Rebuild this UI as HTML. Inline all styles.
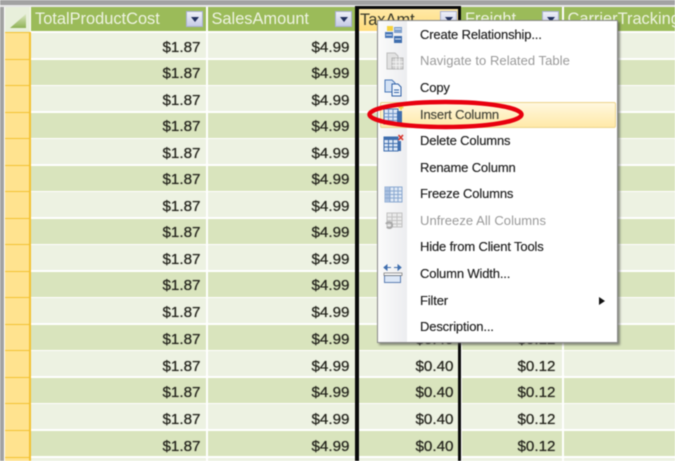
<!DOCTYPE html>
<html><head><meta charset="utf-8">
<style>
html,body{margin:0;padding:0;background:#fff}
#p{position:relative;width:675px;height:461px;overflow:hidden;background:#fff;font-family:"Liberation Sans",sans-serif;filter:blur(.45px)}
#p div{position:absolute;box-sizing:border-box}
.r{left:5px;width:670px;height:25px}
.l{background:#edf2e2}.d{background:#d9e4bd}
.y{left:5px;width:26px;height:27.5px;background:#ffe38f;border-right:2px solid #f3c232;border-top:1px solid #f3c232;border-bottom:1px solid #f3c232}
.s{top:7px;width:2px;height:454px;background:#fff}
.c{font-size:15.2px;line-height:19px;text-align:right;color:#23231a;white-space:nowrap;text-shadow:0 0 .6px #333}
.a{left:100px;width:100.500px;margin-top:-1px}.b{left:250px;width:99.500px;margin-top:-1px}.t{left:350px;width:103.500px}.f{left:455px;width:100.500px}
.t ~ .a,.t ~ .b{margin-top:0}
.h{top:7px;height:24px;background:#9bbb59;color:#eef3e2;font-size:16.4px;line-height:25px;white-space:nowrap;overflow:hidden;padding-left:4px}
.btn{top:11px;width:17px;height:16px;background:linear-gradient(#eef0f8,#c6cbe6);border:1px solid #a8afd4}
.btn:after{content:"";position:absolute;left:4px;top:5px;border:4px solid transparent;border-top:5px solid #22305e}
.m{left:420px;font-size:13px;line-height:18px;color:#222;white-space:nowrap;letter-spacing:-.15px;text-shadow:0 0 .4px #444}
.g{color:#9a9a9a;letter-spacing:.05px;text-shadow:none}
svg{position:absolute}
</style></head><body>
<div id="p">
<div style="left:0;top:0;width:675px;height:6px;background:#a2a2a2"></div>
<div style="left:0;top:0;width:4px;height:461px;background:#a2a2a2"></div>
<div style="left:0;top:5px;width:675px;height:2px;background:#e8e8e8"></div>

<div class="r l" style="top:33px"></div><div class="r d" style="top:59.500px"></div><div class="r l" style="top:86px"></div><div class="r d" style="top:112.600px"></div><div class="r l" style="top:139.100px"></div><div class="r d" style="top:165.700px"></div><div class="r l" style="top:192.200px"></div><div class="r d" style="top:218.700px"></div><div class="r l" style="top:245.200px"></div><div class="r d" style="top:271.800px"></div><div class="r l" style="top:298.300px"></div><div class="r d" style="top:324.800px"></div><div class="r l" style="top:351.400px"></div><div class="r d" style="top:377.900px"></div><div class="r l" style="top:404.400px"></div><div class="r d" style="top:431px"></div><div class="r l" style="top:457.500px"></div>

<div class="y" style="top:32px"></div><div class="y" style="top:58.500px"></div><div class="y" style="top:85px"></div><div class="y" style="top:111.600px"></div><div class="y" style="top:138.100px"></div><div class="y" style="top:164.700px"></div><div class="y" style="top:191.200px"></div><div class="y" style="top:217.700px"></div><div class="y" style="top:244.200px"></div><div class="y" style="top:270.800px"></div><div class="y" style="top:297.300px"></div><div class="y" style="top:323.800px"></div><div class="y" style="top:350.400px"></div><div class="y" style="top:376.900px"></div><div class="y" style="top:403.400px"></div><div class="y" style="top:430px"></div><div class="y" style="top:456.500px"></div>

<div class="s" style="left:206px"></div><div class="s" style="left:561.500px"></div><div class="s" style="left:460px"></div>

<div style="left:5px;top:7px;width:25px;height:25px;background:#e8efdb"></div>
<svg style="left:5px;top:7px" width="25" height="25"><defs><linearGradient id="tri" x1="0" y1="0" x2="0" y2="1"><stop offset="0" stop-color="#dbe6c2"/><stop offset="1" stop-color="#8fb255"/></linearGradient></defs><path d="M5 21L21 7V21Z" fill="url(#tri)"/></svg>

<div class="h" style="left:31px;width:175px">TotalProductCost</div>
<div class="h" style="left:207.500px;width:148px">SalesAmount</div>
<div class="h" style="left:359px;width:99px;background:linear-gradient(#ffe9a8,#ffdc7c);color:#3a3a2a;top:9px;height:22px;line-height:23px;padding-left:1px">TaxAmt</div>
<div class="h" style="left:461px;width:101px">Freight</div>
<div class="h" style="left:563.500px;width:112px">CarrierTracking</div>
<div class="btn" style="left:186px"></div><div class="btn" style="left:335px"></div><div class="btn" style="left:440px"></div><div class="btn" style="left:542px"></div>

<div class="c a" style="top:38.500px">$1.87</div><div class="c b" style="top:38.500px">$4.99</div>
<div class="c a" style="top:65px">$1.87</div><div class="c b" style="top:65px">$4.99</div>
<div class="c a" style="top:91.500px">$1.87</div><div class="c b" style="top:91.500px">$4.99</div>
<div class="c a" style="top:118px">$1.87</div><div class="c b" style="top:118px">$4.99</div>
<div class="c a" style="top:144.600px">$1.87</div><div class="c b" style="top:144.600px">$4.99</div>
<div class="c a" style="top:171.200px">$1.87</div><div class="c b" style="top:171.200px">$4.99</div>
<div class="c a" style="top:197.700px">$1.87</div><div class="c b" style="top:197.700px">$4.99</div>
<div class="c a" style="top:224.200px">$1.87</div><div class="c b" style="top:224.200px">$4.99</div>
<div class="c a" style="top:250.700px">$1.87</div><div class="c b" style="top:250.700px">$4.99</div>
<div class="c a" style="top:277.300px">$1.87</div><div class="c b" style="top:277.300px">$4.99</div>
<div class="c a" style="top:303.800px">$1.87</div><div class="c b" style="top:303.800px">$4.99</div>
<div class="c a" style="top:330.300px;margin-top:0">$1.87</div><div class="c b" style="top:330.300px;margin-top:0">$4.99</div><div class="c t" style="top:330.300px">$0.40</div><div class="c f" style="top:330.300px">$0.12</div>
<div class="c a" style="top:356.900px">$1.87</div><div class="c b" style="top:356.900px">$4.99</div><div class="c t" style="top:356.900px">$0.40</div><div class="c f" style="top:356.900px">$0.12</div>
<div class="c a" style="top:383.400px">$1.87</div><div class="c b" style="top:383.400px">$4.99</div><div class="c t" style="top:383.400px">$0.40</div><div class="c f" style="top:383.400px">$0.12</div>
<div class="c a" style="top:409.900px">$1.87</div><div class="c b" style="top:409.900px">$4.99</div><div class="c t" style="top:409.900px">$0.40</div><div class="c f" style="top:409.900px">$0.12</div>
<div class="c a" style="top:436.500px">$1.87</div><div class="c b" style="top:436.500px">$4.99</div><div class="c t" style="top:436.500px">$0.40</div><div class="c f" style="top:436.500px">$0.12</div>

<div style="left:355px;top:6px;width:4px;height:455px;background:#0a0a0a"></div>
<div style="left:457.500px;top:6px;width:3.500px;height:455px;background:#0a0a0a"></div>
<div style="left:355px;top:6px;width:106px;height:3px;background:#0a0a0a"></div>

<div style="left:377px;top:20px;width:241px;height:323px;background:#fff;border:1px solid #8a8a8a;box-shadow:2px 2px 2px rgba(60,60,60,.55)"></div>
<div style="left:378px;top:21px;width:29px;height:321px;background:linear-gradient(90deg,#fbfbfb,#ecedf0)"></div>
<div style="left:380px;top:102px;width:236px;height:26px;background:linear-gradient(#fff8df,#ffe9a8);border:1px solid #ecd48c;border-radius:2px"></div>

<div class="m" style="top:26px">Create Relationship...</div>
<div class="m g" style="top:52px">Navigate to Related Table</div>
<div class="m" style="top:79px">Copy</div>
<div class="m" style="top:106px;color:#4a4a3a">Insert Column</div>
<div class="m" style="top:132px">Delete Columns</div>
<div class="m" style="top:159px">Rename Column</div>
<div class="m" style="top:185px">Freeze Columns</div>
<div class="m g" style="top:212px">Unfreeze All Columns</div>
<div class="m" style="top:238px">Hide from Client Tools</div>
<div class="m" style="top:265px">Column Width...</div>
<div class="m" style="top:292px">Filter</div>
<div class="m" style="top:318px">Description...</div>
<svg style="left:598px;top:296px" width="9" height="10"><path d="M1 1L7 5L1 9Z" fill="#111"/></svg>

<svg style="left:384px;top:25px" width="20" height="20"><rect x="1" y="7" width="8" height="6" fill="#4a78b8"/><rect x="10" y="2" width="8" height="6" fill="#7fa0cc"/><rect x="10" y="11" width="8" height="7" fill="#3f6eae"/><rect x="3" y="1" width="6" height="5" fill="#f5d23c"/><path d="M11 4h6M11 14h6M2 10h6" stroke="#dfe8f5"/></svg>
<svg style="left:386px;top:52px" width="18" height="19"><path d="M1 1H9L12 4V17H1Z" fill="#e2e2e2" stroke="#bdbdbd"/><rect x="6" y="6" width="11" height="11" fill="#d4d4d4" stroke="#b5b5b5"/><path d="M6 10h11M6 13.500h11M10 6v11M13.500 6v11" stroke="#f2f2f2"/></svg>
<svg style="left:384px;top:79px" width="20" height="18"><path d="M1 1H8L11 4V13H1Z" fill="#d4e2f5" stroke="#4a78b8"/><path d="M8 5H14L17 8V17H8Z" fill="#eef4fc" stroke="#2f5fa5"/><path d="M10 11h5M10 13.500h5" stroke="#2f5fa5"/></svg>
<svg style="left:383px;top:104px" width="22" height="22"><rect x="1" y="5" width="14" height="15" fill="#dce7f6" stroke="#3f6eae"/><path d="M1 9.500h14M1 13h14M1 16.500h14M5.500 5v15M10 5v15" stroke="#6f94c8"/><rect x="14" y="7" width="5" height="13" fill="#3f6eae"/><path d="M18 1v5M15.500 3.500h5" stroke="#f2cf3f" stroke-width="1.500"/></svg>
<svg style="left:383px;top:134px" width="22" height="19"><rect x="1" y="3" width="14" height="14" fill="#dce7f6" stroke="#3f6eae"/><rect x="1" y="3" width="14" height="3" fill="#3f6eae"/><path d="M1 9.500h14M1 13h14M5.500 6v11M10 6v11" stroke="#3f6eae"/><rect x="15" y="7" width="3" height="10" fill="#3f6eae"/><path d="M15.500 1L20 6M20 1L15.500 6" stroke="#d8322a" stroke-width="1.600"/></svg>
<svg style="left:384px;top:186px" width="20" height="18"><rect x="1" y="1" width="17" height="15" fill="#dfe8f5" stroke="#8aa8d0"/><rect x="1" y="1" width="5" height="15" fill="#a9c0e0"/><path d="M1 5h17M1 8.500h17M1 12h17M6 1v15M10 1v15M14 1v15" stroke="#8aa8d0"/></svg>
<svg style="left:384px;top:212px" width="20" height="19"><rect x="3" y="1" width="15" height="14" fill="#eaeaea" stroke="#c2c2c2"/><path d="M3 5h15M3 8.500h15M3 12h15M8 1v14M13 1v14" stroke="#c2c2c2"/><path d="M2 12C4 9 9 10 8 14C7 17 4 16 3 15" fill="none" stroke="#a8a8a8" stroke-width="2"/></svg>
<svg style="left:383px;top:264px" width="20" height="22"><path d="M1 3.500H8M4 1L1 3.500L4 6Z" stroke="#3f6eae" fill="#3f6eae"/><path d="M11 3.500H18M15 1L18 3.500L15 6Z" stroke="#3f6eae" fill="#3f6eae"/><rect x="1.500" y="11.500" width="16" height="7" fill="#dce7f6" stroke="#5c7fb3"/><rect x="1" y="9" width="18" height="2.500" fill="#fff" stroke="#555" stroke-width=".6"/></svg>

<svg style="left:365px;top:96px" width="162" height="38"><ellipse cx="80.500" cy="18.500" rx="76" ry="12.500" fill="none" stroke="#e8000f" stroke-width="4.500"/></svg>
</div>
</body></html>
